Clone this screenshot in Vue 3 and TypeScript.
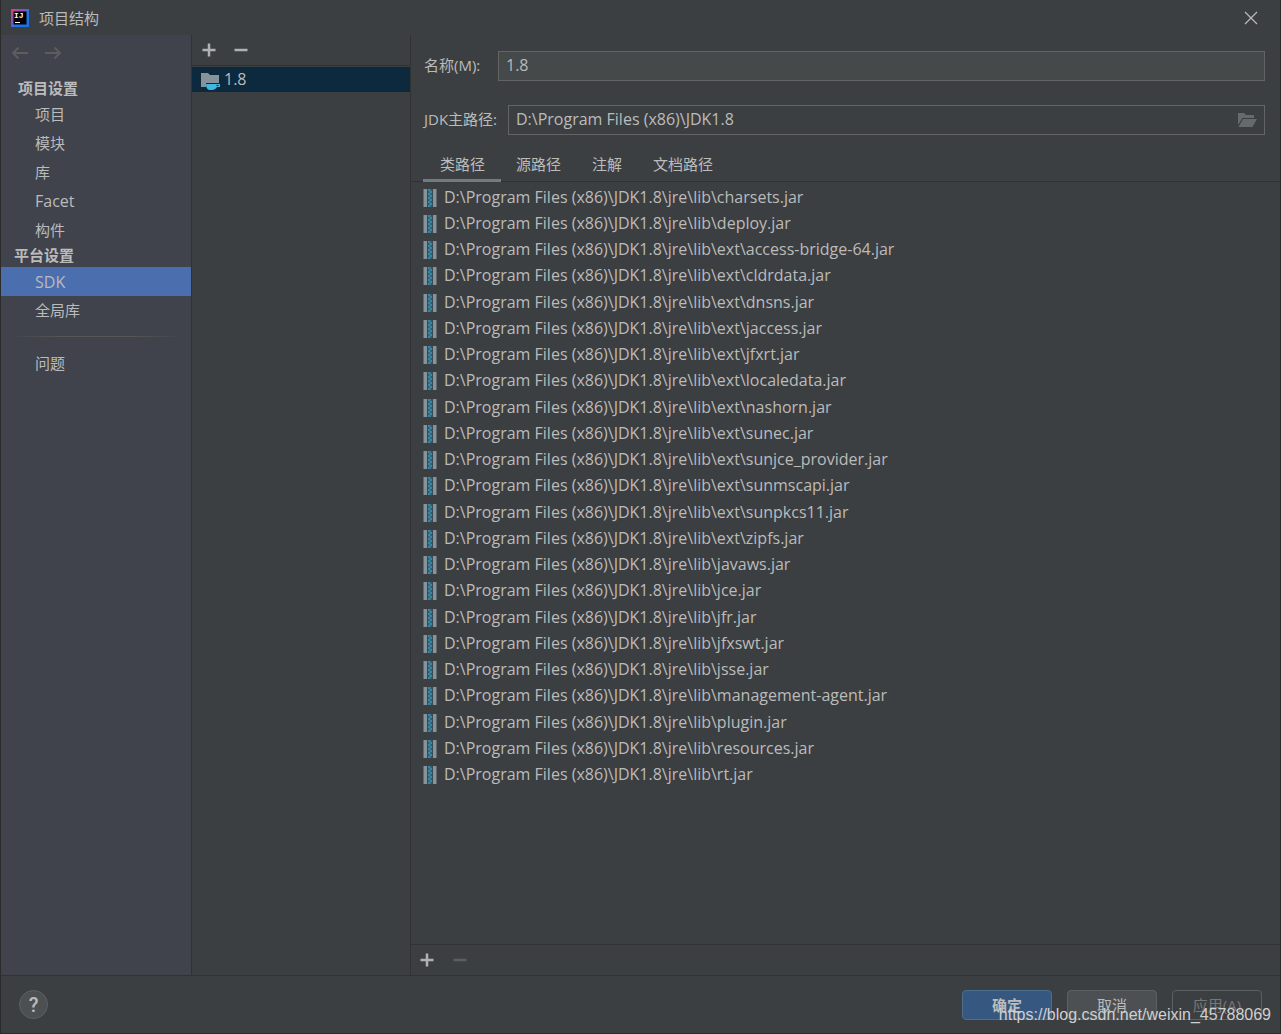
<script setup lang="ts">
import { ref } from 'vue'

interface NavGroup {
  title: string
  items: string[]
}

const groups: NavGroup[] = [
  { title: '项目设置', items: ['项目', '模块', '库', 'Facet', '构件'] },
  { title: '平台设置', items: ['SDK', '全局库'] },
]

const tabs: string[] = ['类路径', '源路径', '注解', '文档路径']

const libRoot = 'D:\\Program Files (x86)\\JDK1.8\\jre\\lib\\'
const jars: string[] = [
  'charsets.jar',
  'deploy.jar',
  'ext\\access-bridge-64.jar',
  'ext\\cldrdata.jar',
  'ext\\dnsns.jar',
  'ext\\jaccess.jar',
  'ext\\jfxrt.jar',
  'ext\\localedata.jar',
  'ext\\nashorn.jar',
  'ext\\sunec.jar',
  'ext\\sunjce_provider.jar',
  'ext\\sunmscapi.jar',
  'ext\\sunpkcs11.jar',
  'ext\\zipfs.jar',
  'javaws.jar',
  'jce.jar',
  'jfr.jar',
  'jfxswt.jar',
  'jsse.jar',
  'management-agent.jar',
  'plugin.jar',
  'resources.jar',
  'rt.jar',
]

const section = ref('SDK')
const tab = ref('类路径')
const sdkName = ref('1.8')
const homePath = ref('D:\\Program Files (x86)\\JDK1.8')

const isLatin = (text: string): boolean => /^[A-Za-z]+$/.test(text)
</script>

<template>
  <div class="dialog">
    <header class="titlebar">
      <svg class="logo" width="18" height="18" viewBox="0 0 18 18" aria-hidden="true">
        <defs>
          <linearGradient id="logo-edge" x1="0" y1="0" x2="1" y2="1">
            <stop offset="0" stop-color="#f0386b" />
            <stop offset="0.4" stop-color="#7a55c8" />
            <stop offset="0.65" stop-color="#1878f0" />
            <stop offset="1" stop-color="#1a6ee8" />
          </linearGradient>
        </defs>
        <rect width="18" height="18" fill="url(#logo-edge)" />
        <rect x="2.500" y="2.500" width="13" height="13" fill="#000" />
        <text x="3" y="9" class="logo-text">IJ</text>
        <rect x="4" y="13" width="5" height="1" fill="#fff" />
      </svg>
      <h1 class="title">项目结构</h1>
      <button class="icon-btn close" type="button" aria-label="关闭">
        <svg width="14" height="14" viewBox="0 0 14 14"><path d="M1 1L13 13M13 1L1 13" stroke="#bbb" stroke-width="1.2" fill="none" /></svg>
      </button>
    </header>

    <main class="body">
      <nav class="sidebar">
        <div class="history">
          <button class="icon-btn" type="button" aria-label="后退" disabled>
            <svg width="18" height="14" viewBox="0 0 18 14"><path d="M17 7H2M7.500 1.500L2 7L7.500 12.500" stroke="#5c5d5f" stroke-width="2" fill="none" /></svg>
          </button>
          <button class="icon-btn" type="button" aria-label="前进" disabled>
            <svg width="18" height="14" viewBox="0 0 18 14"><path d="M1 7H16M10.500 1.500L16 7L10.500 12.500" stroke="#5c5d5f" stroke-width="2" fill="none" /></svg>
          </button>
        </div>
        <template v-for="group in groups" :key="group.title">
          <h2 class="nav-heading">{{ group.title }}</h2>
          <button
            v-for="item in group.items"
            :key="item"
            class="nav-item"
            :class="{ active: item === section, latin: isLatin(item) }"
            type="button"
            @click="section = item"
          >{{ item }}</button>
        </template>
        <hr class="nav-rule" />
        <button class="nav-item" type="button" @click="section = '问题'">问题</button>
      </nav>

      <section class="sdks">
        <div class="toolbar">
          <button class="icon-btn" type="button" aria-label="添加 SDK">
            <svg width="14" height="14" viewBox="0 0 14 14"><path d="M7 0.500V13.500M0.500 7H13.500" stroke="#afb1b3" stroke-width="2.500" /></svg>
          </button>
          <button class="icon-btn" type="button" aria-label="移除 SDK">
            <svg width="14" height="14" viewBox="0 0 14 14"><path d="M0.500 7H13.500" stroke="#afb1b3" stroke-width="2.500" /></svg>
          </button>
        </div>
        <button class="sdk" type="button">
          <svg width="20" height="20" viewBox="0 0 20 20" aria-hidden="true">
            <path d="M1 3H8L10 5H19V13H6V17H1Z" fill="#87939a" />
            <path d="M6 14H20V17H17C16 19 14 20 12 20H10C7.500 20 6 18 6 14Z" fill="#40b6e0" />
            <path d="M16.500 15H18.500V16H16.500Z" fill="#0d293e" />
          </svg>
          <span class="sdk-name">1.8</span>
        </button>
      </section>

      <section class="editor">
        <div class="field">
          <label class="name-label" for="sdk-name">名称(M):</label>
          <input id="sdk-name" v-model="sdkName" class="box name" type="text" />
        </div>
        <div class="field home">
          <label class="home-label" for="sdk-home">JDK主路径:</label>
          <div class="box path">
            <input id="sdk-home" v-model="homePath" type="text" />
            <button class="icon-btn" type="button" aria-label="浏览">
              <svg width="20" height="16" viewBox="0 0 20 16"><path d="M1 1H7L9 3H17V6H5.500L1 13Z" fill="#646a6d" /><path d="M6 7H20L15.500 15H1.500Z" fill="#646a6d" /></svg>
            </button>
          </div>
        </div>

        <div class="tabs" role="tablist">
          <button
            v-for="name in tabs"
            :key="name"
            class="tab"
            :class="{ current: name === tab }"
            role="tab"
            :aria-selected="name === tab"
            type="button"
            @click="tab = name"
          >{{ name }}</button>
        </div>

        <ul class="jars">
          <li v-for="jar in jars" :key="jar">
            <svg width="14" height="18" viewBox="0 0 14 18" aria-hidden="true">
              <path d="M0.500 0H4V18H0.500ZM10 0H13.500V18H10Z" fill="#87939a" />
              <path d="M4.500 0H9.500V18H4.500Z" fill="#35596a" />
              <path d="M5 1H7.500M6.500 3H9M5 5H7.500M6.500 7H9M5 9H7.500M6.500 11H9M5 13H7.500M6.500 15H9M5 17H7.500" stroke="#40b6e0" stroke-width="1.2" />
            </svg>
            <span>{{ libRoot + jar }}</span>
          </li>
        </ul>

        <div class="jar-tools">
          <button class="icon-btn" type="button" aria-label="添加路径">
            <svg width="14" height="14" viewBox="0 0 14 14"><path d="M7 0.500V13.500M0.500 7H13.500" stroke="#afb1b3" stroke-width="2.500" /></svg>
          </button>
          <button class="icon-btn" type="button" aria-label="移除路径" disabled>
            <svg width="14" height="14" viewBox="0 0 14 14"><path d="M0.500 7H13.500" stroke="#5c5e60" stroke-width="2.500" /></svg>
          </button>
        </div>
      </section>
    </main>

    <footer class="footer">
      <button class="help" type="button" aria-label="帮助">?</button>
      <div class="actions">
        <button class="btn primary" type="button">确定</button>
        <button class="btn" type="button">取消</button>
        <button class="btn" type="button" disabled>应用(A)</button>
      </div>
      <span class="watermark">https://blog.csdn.net/weixin_45788069</span>
    </footer>
  </div>
</template>

<style>
body {
  margin: 0;
  background: #3c3f41;
}
</style>

<style scoped>
.dialog {
  box-sizing: border-box;
  display: flex;
  flex-direction: column;
  min-height: 100vh;
  border: 1px solid #2b2b2b;
  border-top: 0;
  background: #3c3f41;
  color: #bbbbbb;
  font-family: "Open Sans", "Noto Sans CJK SC", sans-serif;
  font-size: 15px;
  line-height: 20px;
}

button,
input {
  margin: 0;
  padding: 0;
  border: 0;
  background: none;
  color: inherit;
  font: inherit;
}

h1,
h2 {
  margin: 0;
  font-size: 15px;
}

svg {
  display: block;
  flex: none;
}

.titlebar {
  display: flex;
  align-items: center;
  height: 35px;
  padding: 0 22px 0 10px;
}

.logo-text {
  fill: #ffffff;
  font-family: "Liberation Mono", monospace;
  font-size: 8px;
  font-weight: 700;
}

.title {
  margin-left: 10px;
  font-weight: 400;
}

.close {
  margin-left: auto;
}

.body {
  display: flex;
  flex: 1;
}

.sidebar {
  flex: 0 0 190px;
  display: flex;
  flex-direction: column;
  border-right: 1px solid #323232;
  background: #40434c;
}

.history {
  display: flex;
  align-items: center;
  gap: 15px;
  height: 35px;
  padding: 0 10px;
  margin-bottom: 7px;
}

.nav-heading {
  padding: 0 0 2px 13px;
}

.history + .nav-heading {
  padding: 1px 0 2px 17px;
}

.nav-item {
  height: 29px;
  padding: 0 0 2px 34px;
  text-align: left;
}

.nav-item.active {
  padding-bottom: 0;
  background: #4b6eaf;
}

.nav-item.latin {
  font-size: 16px;
}

.nav-rule {
  width: 100%;
  height: 1px;
  margin: 11px 0 12px;
  border: 0;
  background: linear-gradient(to right, transparent 5%, #555555 30%, #555555 70%, transparent 95%);
}

.sdks {
  flex: 0 0 218px;
  border-right: 1px solid #323232;
}

.toolbar {
  display: flex;
  align-items: center;
  gap: 18px;
  height: 30px;
  padding-left: 10px;
  margin-bottom: 1px;
  border-bottom: 1px solid #323232;
}

.sdk {
  display: flex;
  align-items: center;
  gap: 4px;
  width: 100%;
  height: 25px;
  padding-left: 8px;
  background: #0d293e;
  font-size: 16px;
}

.sdk-name {
  padding-bottom: 2px;
}

.editor {
  flex: 1;
  min-width: 0;
  display: flex;
  flex-direction: column;
}

.field {
  display: flex;
  align-items: center;
  margin: 16px 15px 0 13px;
}

.field.home {
  margin-top: 24px;
}

.field label {
  padding-bottom: 2px;
  white-space: nowrap;
}

.name-label {
  flex: 0 0 74px;
}

.home-label {
  flex: 0 0 84px;
}

.box {
  box-sizing: border-box;
  flex: 1;
  min-width: 0;
  height: 30px;
  padding: 0 7px;
  border: 1px solid #646464;
  font-size: 16px;
}

.name {
  padding-bottom: 2px;
  background: #45494a;
}

.path {
  display: flex;
  align-items: center;
}

.path input {
  flex: 1;
  min-width: 0;
  padding-bottom: 2px;
}

.tabs {
  display: flex;
  height: 46px;
  padding-left: 13px;
  border-bottom: 1px solid #323232;
}

.tab {
  position: relative;
  padding: 12px 15px 0 16px;
}

/* The underline is slightly wider than its tab and covers the divider. */
.tab.current::after {
  content: "";
  position: absolute;
  left: -1px;
  right: -1px;
  bottom: -1px;
  height: 3px;
  background: #747a80;
}

/* Every fourth row takes one more pixel, for a pitch of a little over 26px. */
.jars {
  flex: 1;
  display: grid;
  align-content: start;
  grid-auto-rows: 26px 26px 26px 27px;
  margin: 0;
  padding: 3px 0 0 12px;
  list-style: none;
  font-size: 16px;
  line-height: 24px;
}

.jars li {
  display: flex;
  align-items: flex-start;
  gap: 7px;
  white-space: nowrap;
}

.jars svg {
  margin-top: 4px;
}

.jar-tools {
  display: flex;
  align-items: center;
  gap: 19px;
  height: 30px;
  padding-left: 9px;
  border-top: 1px solid #323232;
}

.footer {
  position: relative;
  display: flex;
  align-items: center;
  justify-content: space-between;
  height: 57px;
  padding: 0 18px;
  border-top: 1px solid #323232;
}

.help {
  box-sizing: border-box;
  width: 29px;
  height: 29px;
  border: 1px solid #5e6264;
  border-radius: 50%;
  background: #4c5052;
  font-family: Roboto, sans-serif;
  font-size: 20px;
  font-weight: 500;
}

.actions {
  display: flex;
  gap: 15px;
}

.btn {
  box-sizing: border-box;
  width: 90px;
  height: 30px;
  border: 1px solid #5e6060;
  border-radius: 4px;
  background: #4c5052;
}

.btn.primary {
  border-color: #4c708c;
  background: #365880;
  font-weight: 700;
}

.btn:disabled {
  background: none;
  color: #777777;
}

.watermark {
  position: absolute;
  right: 9px;
  bottom: 8px;
  color: #d0d0d0;
  font-family: "Liberation Sans", Arial, sans-serif;
  font-size: 16px;
  pointer-events: none;
}
</style>
